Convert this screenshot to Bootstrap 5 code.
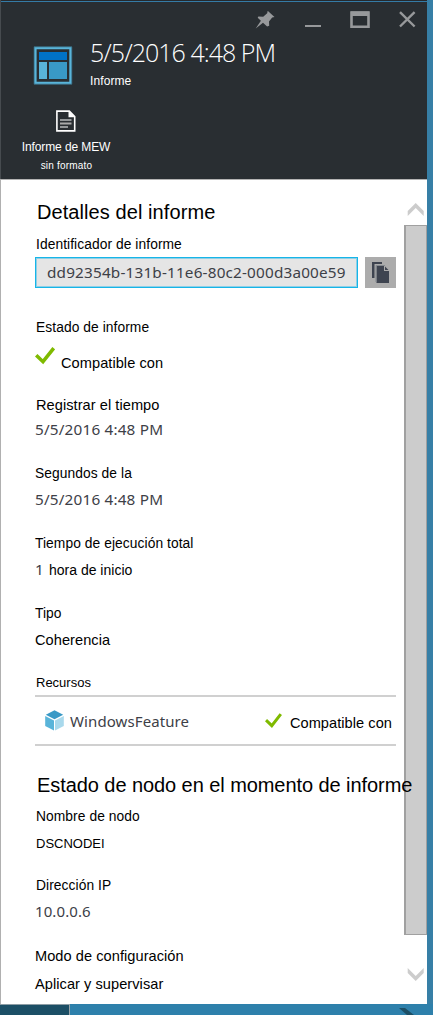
<!DOCTYPE html>
<html lang="es">
<head>
<meta charset="utf-8">
<meta name="viewport" content="width=device-width, initial-scale=1">
<title>Informe</title>
<link href="https://cdn.jsdelivr.net/npm/bootstrap@5.3.0/dist/css/bootstrap.min.css" rel="stylesheet">
<style>
body{width:433px;height:1015px;background:#377fa6;font-family:"Liberation Sans",sans-serif;font-size:13px;line-height:20px;color:#000}
svg{display:block;flex:none}
.ui{font-family:"Noto Sans",sans-serif;font-size:15.3px;letter-spacing:.18px;color:#3d4047}
.ui-tight{font-size:15px;letter-spacing:.1px}
.blade{width:427px;height:1004px}
.blade-top{height:179px;background:#292e32;border-left:1px solid #464b4f;color:#fff}
.topline{height:3px;background:linear-gradient(#25292d 0 1px,#347ba6 1px 2px,#292e32 2px)}
.win-tools{height:33px;padding:8px 8px 0 0}
.tool-min{margin-left:26px}
.tool-next{margin-left:25px}
.ident{padding-left:32px;height:61px}
.ident-text{padding-left:17px}
.ident h1{font:300 25px/34px "Open Sans",sans-serif;letter-spacing:-.97px;margin:-1px 0 1px}
.ident small{font-size:12px;line-height:16px;display:block;padding-top:3px;letter-spacing:.1px}
.command{width:130px;padding-top:13px}
.command span{font-size:12px;line-height:18px;letter-spacing:-.1px;padding-top:1px}
.command .sub{font-size:10px;line-height:16px;letter-spacing:.2px;padding:2px 0 0 1px}
.blade-body{height:825px;border-left:1px solid #b0b0b0;border-top:1px solid #b3b3b3;background:#fff}
.details{width:403px;padding:20px 0 0 34px}
.details h2{font-size:20px;line-height:24px;font-weight:400;white-space:nowrap;padding-left:2px;margin:0;letter-spacing:.08px;position:relative;z-index:2}
.details .h-node{letter-spacing:-.07px;margin-top:27px}
.field{height:70px;white-space:nowrap}
.field-status{height:77px;margin-top:30px}
.field-short{height:69px}
.field-node{height:69px;margin-top:10px}
.lbl{font-size:13.8px;letter-spacing:.07px;padding-left:1px}
.lbl-sm{font-size:13px;padding-left:1px}
.lg{font-size:14.6px;letter-spacing:.05px}
.md{font-size:14px}
.gap4{gap:4px}.gap5{gap:5px}.gap6{gap:6px}.gap7{gap:7px}.gap8{gap:8px}.gap15{gap:15px}
.id-label{margin-top:11px}
.id-row{margin-top:2px}
.idbox{width:323px;height:31px;border:1px solid #16b5e8;box-shadow:inset 0 0 0 1px #8fcfe6;background:#e5e5e5;padding:4px 11px;line-height:21px;white-space:nowrap}
.idbox span{display:block;overflow:hidden}
.copy{width:31px;height:31px;background:#acacac}
.check-lg{margin:-14px 6px 0 0}
.hours{margin-top:-1px;width:14px}
.resource{width:361px;height:51px;margin-top:2px;border-top:2px solid #d0d0d0;border-bottom:2px solid #d0d0d0;padding:0 4px 0 10px}
.resource .ui{margin-left:6px}
.resource .lg{margin:4px 0 0 8px}
.scroller{width:23px}
.thumb{height:710px;background:#ccc;border:1px solid #a0a0a0;border-left-width:2px}
.footer-strip{height:11px;background:#2e80ab;width:433px}
.footer-tile{width:70px;background:#1c4f66;border-top:1px solid #8d9da5;border-right:1px solid #9aa5aa}
</style>
</head>
<body class="overflow-hidden">
<main class="blade d-flex flex-column">
  <header class="blade-top">
    <div class="topline"></div>
    <div class="win-tools d-flex justify-content-end align-items-start">
      <svg width="20" height="20" viewBox="0 0 20 20" fill="#97999b"><path d="M12.7-.2 19.5 6 17.2 6.5 14 10.5 14.2 14.8 12.1 15.4 8 11.8.7 17.4 5.9 9.8 2.7 6.8 3.4 5.4 8.2 5.8 12.2 2.3Z"/></svg>
      <svg class="tool-min" width="24" height="20" viewBox="0 0 24 20"><path d="M4 14h16v2H4z" fill="#97999b"/></svg>
      <svg class="tool-next" width="20" height="20" viewBox="0 0 20 20"><path d="M1.5 1.5h17v14.2h-17z" fill="none" stroke="#97999b" stroke-width="2.6"/><path d="M1 .5h18V5H1z" fill="#97999b"/></svg>
      <svg class="tool-next" width="24" height="20" viewBox="0 0 24 20"><path d="m5 1.2 14.6 14.3M19.6 1.2 5 15.5" stroke="#97999b" stroke-width="2.4"/></svg>
    </div>
    <div class="ident d-flex">
      <svg class="mt-2" width="40" height="44" viewBox="0 0 40 44"><path d="M2.3 4h35.3v35H2.3z" fill="none" stroke="#59b4d9" stroke-width="2.6"/><path d="M1.1 2.8h37.7v37.4H1.1z" fill="none" stroke="#386b80" stroke-width=".8"/><path d="M6 8h28v8H6z" fill="#0072c6"/><path d="M6 18h8v17H6z" fill="#59b4d9"/><path d="M16 18h18v17H16z" fill="#3999c6"/></svg>
      <div class="ident-text"><h1>5/5/2016 4:48 PM</h1><small>Informe</small></div>
    </div>
    <div class="command d-flex flex-column align-items-center">
      <svg width="22" height="23" viewBox="0 0 22 23"><path d="M1.9 1.1h12.4l5.4 5.4v14.4H1.9z" fill="none" stroke="#fff" stroke-width="1.6"/><path d="M13.5 1v6.3H20z" fill="#fff"/><path d="M5 10h11.5M5 17h8" stroke="#fff" stroke-width="1.1"/><path d="M5 13.5h11.5" stroke="#aaa" stroke-width="2"/></svg>
      <span class="mt-1">Informe de MEW</span><span class="sub">sin formato</span>
    </div>
  </header>

  <section class="blade-body d-flex">
    <div class="details">
      <h2>Detalles del informe</h2>
      <div class="lbl id-label">Identificador de informe</div>
      <div class="id-row d-flex gap7">
        <div class="idbox ui"><span>dd92354b-131b-11e6-80c2-000d3a00e59</span></div>
        <div class="copy"><svg width="31" height="31" viewBox="0 0 31 31"><path d="M7 5h10v2H9.5v14H7z" fill="#3e4450"/><path d="M11.5 9h7.5v5h5v12H11.5z" fill="#3e4450"/><path d="M11 25V8.5h9" fill="none" stroke="#858a90" stroke-width="1"/><path d="M20 9.5 23.5 13H20z" fill="#3e4450"/></svg></div>
      </div>
      <div class="field field-status d-flex flex-column gap15">
        <div class="lbl">Estado de informe</div>
        <div class="d-flex align-items-center"><svg class="check-lg" width="20" height="18" viewBox="0 0 20 18"><path d="m1.2 8.2 6.8 6.5L18.8 1.2" fill="none" stroke="#7fba00" stroke-width="3.6"/></svg><span class="lg">Compatible con</span></div>
      </div>
      <div class="field field-short d-flex flex-column gap4"><div class="lbl lg">Registrar el tiempo</div><div class="ui">5/5/2016 4:48 PM</div></div>
      <div class="field d-flex flex-column gap5"><div class="lbl ps-0">Segundos de la</div><div class="ui">5/5/2016 4:48 PM</div></div>
      <div class="field d-flex flex-column gap6"><div class="lbl ps-0">Tiempo de ejecución total</div><div class="d-flex"><span class="ui hours">1</span><span class="md">hora de inicio</span></div></div>
      <div class="field field-short d-flex flex-column gap6"><div class="lbl ps-0">Tipo</div><div class="lg">Coherencia</div></div>
      <div class="lbl-sm">Recursos</div>
      <div class="resource d-flex align-items-center">
        <svg width="19" height="21" viewBox="0 0 19 21"><path d="M9.5.2 18.2 4.8 9.5 9.3.8 4.8z" fill="#3999c6"/><path d="M.2 6 9 10.5v10L.2 16z" fill="#59b4d9"/><path d="M18.8 6 10 10.5v10l8.8-4.5z" fill="#a9d9ec"/></svg>
        <span class="ui ui-tight">WindowsFeature</span>
        <svg class="ms-auto" width="17" height="15" viewBox="0 0 17 15"><path d="m1 7.2 5.8 5.5L15.8 1.2" fill="none" stroke="#7fba00" stroke-width="3"/></svg>
        <span class="lg">Compatible con</span>
      </div>
      <h2 class="h-node">Estado de nodo en el momento de informe</h2>
      <div class="field field-node d-flex flex-column gap7"><div class="lbl">Nombre de nodo</div><div class="lbl-sm">DSCNODEI</div></div>
      <div class="field d-flex flex-column gap5"><div class="lbl">Dirección IP</div><div class="ui ui-tight">10.0.0.6</div></div>
      <div class="d-flex flex-column gap8"><div class="lg">Modo de configuración</div><div class="lg">Aplicar y supervisar</div></div>
    </div>
    <div class="scroller">
      <svg width="23" height="45" viewBox="0 0 23 45"><path d="m11.7 23 8 8v5l-8-8-8 8v-5z" fill="#ccc"/></svg>
      <div class="thumb"></div>
      <svg width="23" height="60" viewBox="0 0 23 60"><path d="m11.7 46 8-8v-5l-8 8-8-8v5z" fill="#ccc"/></svg>
    </div>
  </section>
</main>
<footer class="footer-strip d-flex justify-content-between"><div class="footer-tile"></div><svg width="40" height="11" viewBox="0 0 40 11"><path d="M6 4h6l9 7h-7z" fill="#1c4f66"/></svg></footer>
<script src="https://cdn.jsdelivr.net/npm/bootstrap@5.3.0/dist/js/bootstrap.bundle.min.js"></script>
</body>
</html>
